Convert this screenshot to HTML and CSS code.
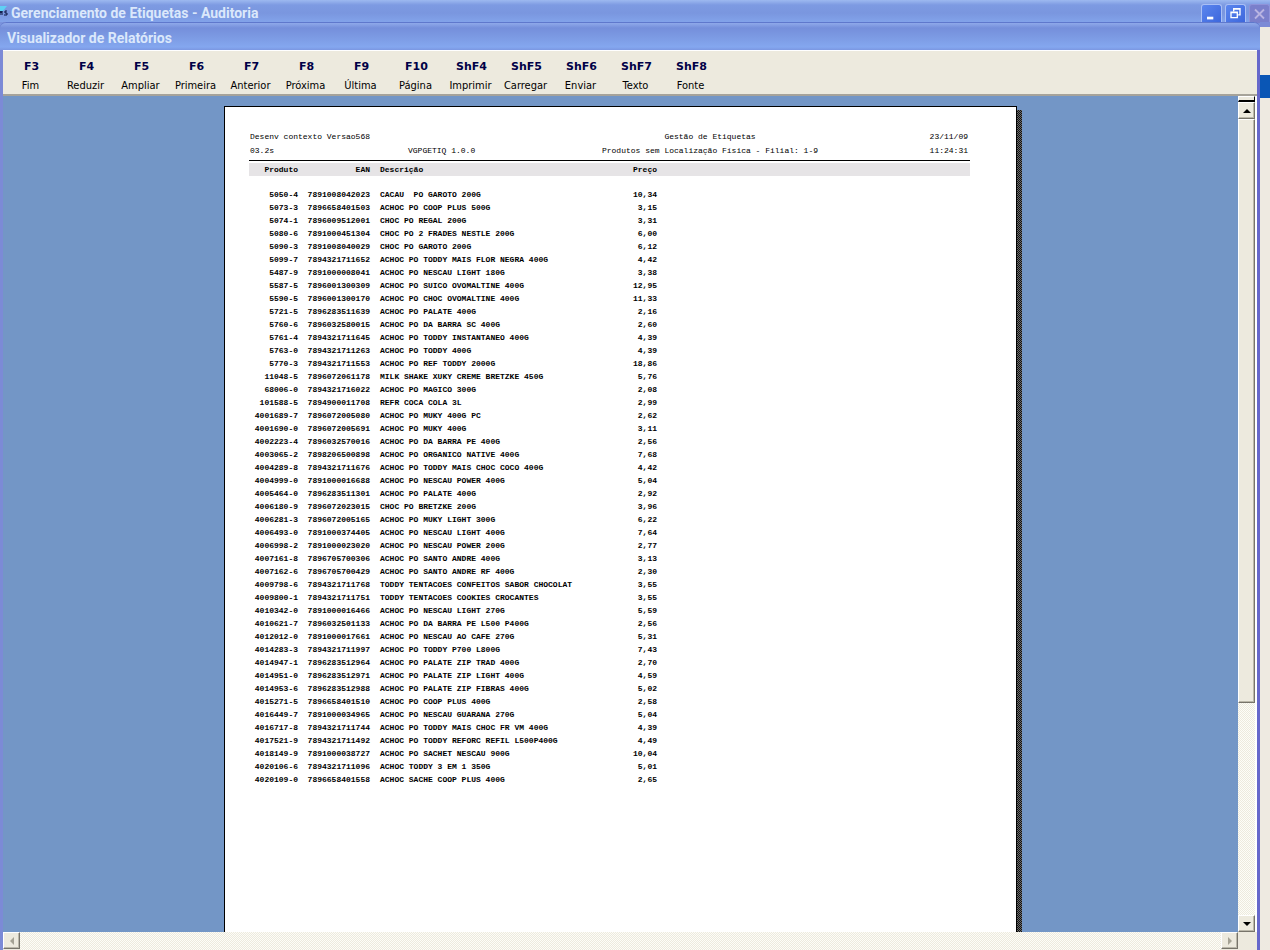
FILE: index.html
```html
<!DOCTYPE html>
<html lang="pt-BR">
<head>
<meta charset="utf-8">
<title>Gerenciamento de Etiquetas - Auditoria</title>
<link rel="stylesheet" href="styles.css">
</head>
<body>
<div class="app">
  <header class="app-title">
    <svg class="app-icon" viewBox="0 0 8 14" aria-hidden="true"><path d="M0 0H7L3 5H0Z" fill="#5fd0f4"/><path d="M0 9V5L1 7L2 5V9M7 5H5V7H7V9H4" fill="none" stroke="#0a1440"/></svg>
    <h1 class="title-text">Gerenciamento de Etiquetas - Auditoria</h1>
    <div class="window-buttons">
      <button class="win-btn" aria-label="Minimizar"><svg viewBox="0 0 20 20"><path d="M5 13h7v3H5z" fill="#fff"/></svg></button>
      <button class="win-btn" aria-label="Restaurar"><svg viewBox="0 0 20 20"><path d="M8 7V4h7v7h-2M8 4.500h7M5 8h7v6H5zM5 8.500h7" fill="none" stroke="#fff" stroke-width="1.500"/></svg></button>
      <button class="win-btn win-close" aria-label="Fechar"><svg viewBox="0 0 20 20"><path d="M5 5l10 10M15 5L5 15" fill="none" stroke="#b9b4e2" stroke-width="2"/></svg></button>
    </div>
  </header>
  <div class="desktop">
    <main class="viewer">
      <h2 class="viewer-title title-text">Visualizador de Relatórios</h2>
      <nav class="toolbar">
        <button class="tool"><b>F3</b><span>Fim</span></button>
        <button class="tool"><b>F4</b><span>Reduzir</span></button>
        <button class="tool"><b>F5</b><span>Ampliar</span></button>
        <button class="tool"><b>F6</b><span>Primeira</span></button>
        <button class="tool"><b>F7</b><span>Anterior</span></button>
        <button class="tool"><b>F8</b><span>Próxima</span></button>
        <button class="tool"><b>F9</b><span>Última</span></button>
        <button class="tool"><b>F10</b><span>Página</span></button>
        <button class="tool"><b>ShF4</b><span>Imprimir</span></button>
        <button class="tool"><b>ShF5</b><span>Carregar</span></button>
        <button class="tool"><b>ShF6</b><span>Enviar</span></button>
        <button class="tool"><b>ShF7</b><span>Texto</span></button>
        <button class="tool"><b>ShF8</b><span>Fonte</span></button>
      </nav>
      <div class="workspace">
        <div class="canvas">
          <article class="paper">
            <div class="report">
              <div class="report-head">
                <span>Desenv contexto Versao568</span><span></span><span class="center">Gestão de Etiquetas</span><span class="right">23/11/09</span>
                <span>03.2s</span><span>VGPGETIQ 1.0.0</span><span class="center">Produtos sem Localização Física - Filial: 1-9</span><span class="right">11:24:31</span>
              </div>
              <table class="items">
                <colgroup><col class="c-code"><col class="c-ean"><col class="c-desc"><col class="c-price"><col></colgroup>
                <thead><tr><th>Produto</th><th>EAN</th><th>Descrição</th><th>Preço</th><th></th></tr></thead>
                <tbody>
<tr><td>5050-4</td><td>7891008042023</td><td>CACAU  PO GAROTO 200G</td><td>10,34</td></tr>
<tr><td>5073-3</td><td>7896658401503</td><td>ACHOC PO COOP PLUS 500G</td><td>3,15</td></tr>
<tr><td>5074-1</td><td>7896009512001</td><td>CHOC PO REGAL 200G</td><td>3,31</td></tr>
<tr><td>5080-6</td><td>7891000451304</td><td>CHOC PO 2 FRADES NESTLE 200G</td><td>6,00</td></tr>
<tr><td>5090-3</td><td>7891008040029</td><td>CHOC PO GAROTO 200G</td><td>6,12</td></tr>
<tr><td>5099-7</td><td>7894321711652</td><td>ACHOC PO TODDY MAIS FLOR NEGRA 400G</td><td>4,42</td></tr>
<tr><td>5487-9</td><td>7891000008041</td><td>ACHOC PO NESCAU LIGHT 180G</td><td>3,38</td></tr>
<tr><td>5587-5</td><td>7896001300309</td><td>ACHOC PO SUICO OVOMALTINE 400G</td><td>12,95</td></tr>
<tr><td>5590-5</td><td>7896001300170</td><td>ACHOC PO CHOC OVOMALTINE 400G</td><td>11,33</td></tr>
<tr><td>5721-5</td><td>7896283511639</td><td>ACHOC PO PALATE 400G</td><td>2,16</td></tr>
<tr><td>5760-6</td><td>7896032580015</td><td>ACHOC PO DA BARRA SC 400G</td><td>2,60</td></tr>
<tr><td>5761-4</td><td>7894321711645</td><td>ACHOC PO TODDY INSTANTANEO 400G</td><td>4,39</td></tr>
<tr><td>5763-0</td><td>7894321711263</td><td>ACHOC PO TODDY 400G</td><td>4,39</td></tr>
<tr><td>5770-3</td><td>7894321711553</td><td>ACHOC PO REF TODDY 2000G</td><td>18,86</td></tr>
<tr><td>11048-5</td><td>7896072061178</td><td>MILK SHAKE XUKY CREME BRETZKE 450G</td><td>5,76</td></tr>
<tr><td>68006-0</td><td>7894321716022</td><td>ACHOC PO MAGICO 300G</td><td>2,08</td></tr>
<tr><td>101588-5</td><td>7894900011708</td><td>REFR COCA COLA 3L</td><td>2,99</td></tr>
<tr><td>4001689-7</td><td>7896072005080</td><td>ACHOC PO MUKY 400G PC</td><td>2,62</td></tr>
<tr><td>4001690-0</td><td>7896072005691</td><td>ACHOC PO MUKY 400G</td><td>3,11</td></tr>
<tr><td>4002223-4</td><td>7896032570016</td><td>ACHOC PO DA BARRA PE 400G</td><td>2,56</td></tr>
<tr><td>4003065-2</td><td>7898206500898</td><td>ACHOC PO ORGANICO NATIVE 400G</td><td>7,68</td></tr>
<tr><td>4004289-8</td><td>7894321711676</td><td>ACHOC PO TODDY MAIS CHOC COCO 400G</td><td>4,42</td></tr>
<tr><td>4004999-0</td><td>7891000016688</td><td>ACHOC PO NESCAU POWER 400G</td><td>5,04</td></tr>
<tr><td>4005464-0</td><td>7896283511301</td><td>ACHOC PO PALATE 400G</td><td>2,92</td></tr>
<tr><td>4006180-9</td><td>7896072023015</td><td>CHOC PO BRETZKE 200G</td><td>3,96</td></tr>
<tr><td>4006281-3</td><td>7896072005165</td><td>ACHOC PO MUKY LIGHT 300G</td><td>6,22</td></tr>
<tr><td>4006493-0</td><td>7891000374405</td><td>ACHOC PO NESCAU LIGHT 400G</td><td>7,64</td></tr>
<tr><td>4006998-2</td><td>7891000023020</td><td>ACHOC PO NESCAU POWER 200G</td><td>2,77</td></tr>
<tr><td>4007161-8</td><td>7896705700306</td><td>ACHOC PO SANTO ANDRE 400G</td><td>3,13</td></tr>
<tr><td>4007162-6</td><td>7896705700429</td><td>ACHOC PO SANTO ANDRE RF 400G</td><td>2,30</td></tr>
<tr><td>4009798-6</td><td>7894321711768</td><td>TODDY TENTACOES CONFEITOS SABOR CHOCOLAT</td><td>3,55</td></tr>
<tr><td>4009800-1</td><td>7894321711751</td><td>TODDY TENTACOES COOKIES CROCANTES</td><td>3,55</td></tr>
<tr><td>4010342-0</td><td>7891000016466</td><td>ACHOC PO NESCAU LIGHT 270G</td><td>5,59</td></tr>
<tr><td>4010621-7</td><td>7896032501133</td><td>ACHOC PO DA BARRA PE L500 P400G</td><td>2,56</td></tr>
<tr><td>4012012-0</td><td>7891000017661</td><td>ACHOC PO NESCAU AO CAFE 270G</td><td>5,31</td></tr>
<tr><td>4014283-3</td><td>7894321711997</td><td>ACHOC PO TODDY P700 L800G</td><td>7,43</td></tr>
<tr><td>4014947-1</td><td>7896283512964</td><td>ACHOC PO PALATE ZIP TRAD 400G</td><td>2,70</td></tr>
<tr><td>4014951-0</td><td>7896283512971</td><td>ACHOC PO PALATE ZIP LIGHT 400G</td><td>4,59</td></tr>
<tr><td>4014953-6</td><td>7896283512988</td><td>ACHOC PO PALATE ZIP FIBRAS 400G</td><td>5,02</td></tr>
<tr><td>4015271-5</td><td>7896658401510</td><td>ACHOC PO COOP PLUS 400G</td><td>2,58</td></tr>
<tr><td>4016449-7</td><td>7891000034965</td><td>ACHOC PO NESCAU GUARANA 270G</td><td>5,04</td></tr>
<tr><td>4016717-8</td><td>7894321711744</td><td>ACHOC PO TODDY MAIS CHOC FR VM 400G</td><td>4,39</td></tr>
<tr><td>4017521-9</td><td>7894321711492</td><td>ACHOC PO TODDY REFORC REFIL L500P400G</td><td>4,49</td></tr>
<tr><td>4018149-9</td><td>7891000038727</td><td>ACHOC PO SACHET NESCAU 900G</td><td>10,04</td></tr>
<tr><td>4020106-6</td><td>7894321711096</td><td>ACHOC TODDY 3 EM 1 350G</td><td>5,01</td></tr>
<tr><td>4020109-0</td><td>7896658401558</td><td>ACHOC SACHE COOP PLUS 400G</td><td>2,65</td></tr>
                </tbody>
              </table>
            </div>
          </article>
        </div>
        <div class="vscroll">
          <div class="splitter"></div>
          <button class="arrow" aria-label="Rolar para cima"><svg viewBox="0 0 8 4"><path d="M0 4L4 0L8 4Z" fill="#000"/></svg></button>
          <div class="thumb"></div>
          <div class="track"></div>
          <button class="arrow" aria-label="Rolar para baixo"><svg viewBox="0 0 8 4"><path d="M0 0L4 4L8 0Z" fill="#000"/></svg></button>
        </div>
      </div>
      <div class="hscroll">
        <button class="arrow" aria-label="Rolar para a esquerda" disabled><svg class="side" viewBox="0 0 4 8"><path d="M4 0L0 4L4 8Z" fill="#a5a294"/></svg></button>
        <div class="track"></div>
        <button class="arrow" aria-label="Rolar para a direita" disabled><svg class="side" viewBox="0 0 4 8"><path d="M0 0L4 4L0 8Z" fill="#a5a294"/></svg></button>
        <div class="corner"></div>
      </div>
    </main>
    <aside class="backdrop"><div class="selection"></div></aside>
  </div>
</div>
</body>
</html>
```
FILE: styles.css
```css
* { box-sizing: border-box; }

body {
  margin: 0;
  overflow: hidden;
  font: 11px "DejaVu Sans Condensed", "DejaVu Sans", sans-serif;
  color: #000;
}

button {
  margin: 0;
  padding: 0;
  border: 0;
  background: none;
  font: inherit;
  color: inherit;
}

svg { display: block; }

.app {
  display: flex;
  flex-direction: column;
  height: 100vh;
  background: #7a93dd;
}

.app-title {
  display: flex;
  align-items: center;
  flex: none;
  height: 22px;
  padding-top: 4px;
  background: linear-gradient(#9db9f0 0, #7d9ae2 5px, #7a96df 13px, #82a3ea 22px);
}

.app-icon { width: 8px; height: 14px; margin-right: 3px; }

.title-text {
  margin: 0;
  font: bold 14px/18px Roboto, sans-serif;
  color: #dbe8fb;
}

.window-buttons {
  display: flex;
  gap: 3px;
  margin-left: auto;
}

.win-btn {
  width: 21px;
  height: 19px;
  border: 1px solid #a9bff5;
  border-bottom: 0;
  border-radius: 3px 3px 0 0;
  background: linear-gradient(135deg, #5b86ee, #3c66dc);
}
.win-btn svg { width: 19px; height: 18px; }
.win-close {
  border-color: #8f93d9;
  background: #7a7fcb;
}

.desktop {
  display: flex;
  flex: 1;
  min-height: 0;
}

.viewer {
  display: flex;
  flex: 1;
  flex-direction: column;
  min-width: 0;
  border-left: 3px solid #7c8ad6;
  border-right: 3px solid #6668cb;
  border-radius: 6px 6px 0 0;
  background: #edeade;
}

.viewer-title {
  flex: none;
  height: 28px;
  margin: 0 -3px;
  padding: 6px 7px 0;
  border-top: 1px solid #5f78cc;
  border-radius: 6px 6px 0 0;
  background: linear-gradient(#8fa9ea 0, #758fdb 5px, #7c9ae3 14px, #84a7ef 24px, #7b97e2 27px);
}

.toolbar {
  display: flex;
  flex: none;
  height: 46px;
  border-top: 1px solid #fff;
  border-bottom: 2px solid #a6a39a;
}

.tool {
  display: flex;
  flex-direction: column;
  align-items: center;
  gap: 5px;
  width: 55px;
  padding-top: 9px;
  line-height: 14px;
}
.tool b {
  font-family: "DejaVu Sans", sans-serif;
  color: #000047;
  padding-left: 2px;
}

.workspace {
  display: flex;
  flex: 1;
  min-height: 0;
}

.canvas {
  flex: 1;
  min-width: 0;
  padding-top: 10px;
  overflow: hidden;
  background: #7396c6;
}

.paper {
  position: relative;
  max-width: 793px;
  min-height: 1120px;
  margin: 0 auto;
  padding: 23px 46px 24px 24px;
  border: 1px solid #000;
  background: #fff;
}
.paper::after {
  content: "";
  position: absolute;
  top: 3px;
  bottom: -4px;
  left: 100%;
  width: 5px;
  border-left: 1px solid #000;
  background: repeating-conic-gradient(#111 0 25%, #6b6b6b 0 50%) 0 0 / 2px 2px;
}

.report { font: 8px/14px "Liberation Mono", monospace; }

.report-head {
  display: grid;
  grid-template-columns: 158px 189px 226px 1fr;
  padding: 0 2px 2px 1px;
  border-bottom: 1px solid #000;
  white-space: nowrap;
}
.center { text-align: center; }
.right { text-align: right; }

.items {
  width: 100%;
  margin-top: 2px;
  border-collapse: collapse;
  table-layout: fixed;
  font-weight: bold;
  line-height: 13px;
}
.items th, .items td {
  padding: 0;
  text-align: right;
  white-space: pre;
}
.items th:nth-child(3), .items td:nth-child(3) {
  padding-left: 10px;
  text-align: left;
}
.items thead { background: #e6e4e6; }
.items tbody::before {
  content: "";
  display: block;
  height: 12px;
}
.c-code { width: 49px; }
.c-ean { width: 72px; }
.c-desc { width: 232px; }
.c-price { width: 55px; }

.vscroll {
  display: flex;
  flex-direction: column;
  width: 19px;
  border-right: 2px solid #fff;
}

.splitter {
  height: 6px;
  border: 1px solid #fff;
  border-right: 1px solid #000;
  border-bottom: 2px solid #000;
  background: #edeade;
}

.arrow {
  display: grid;
  place-items: center;
  flex: none;
  width: 17px;
  height: 17px;
  border: 1px solid #fff;
  border-right: 1px solid #77746a;
  border-bottom: 1px solid #77746a;
  background: #edeade;
  box-shadow: inset -1px -1px #bbb8aa;
}
.arrow svg { width: 8px; height: 4px; }
.arrow .side { width: 4px; height: 8px; }

.thumb {
  flex: 583;
  border: 1px solid #fff;
  border-right: 1px solid #77746a;
  border-bottom: 1px solid #77746a;
  background: #edeade;
  box-shadow: inset -1px -1px #bbb8aa;
}

.track {
  flex: 213;
  background: repeating-conic-gradient(#edeade 0 25%, #fdfdf8 0 50%) 0 0 / 2px 2px;
}

.hscroll {
  display: flex;
  flex: none;
  height: 18px;
}
.corner { width: 19px; }

.backdrop {
  flex: none;
  width: 10px;
  padding-top: 48px;
  border-top: 5px solid #7c8ad6;
  background: #eeeae1;
}
.selection { height: 23px; background: #0a56b5; }
```
